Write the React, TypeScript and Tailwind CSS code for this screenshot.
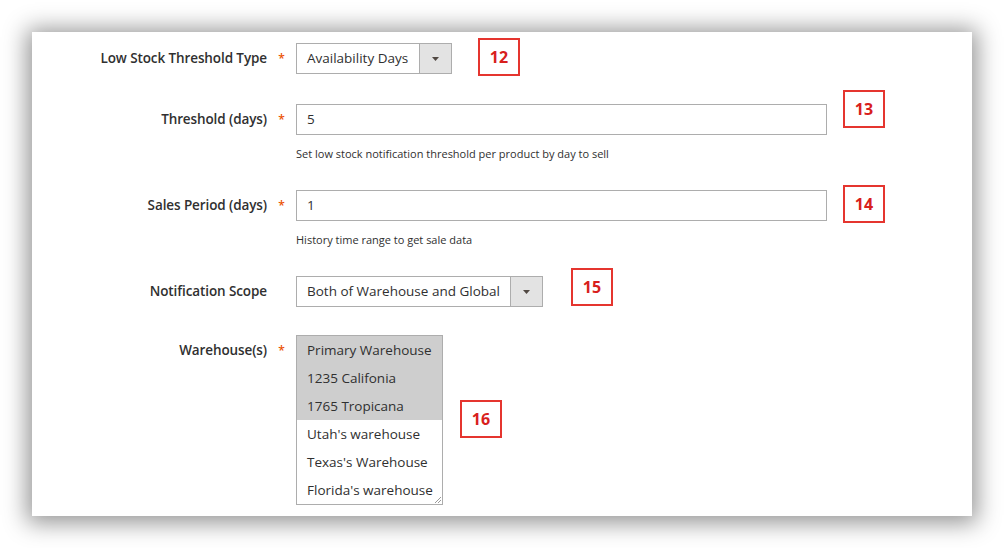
const font = { fontFamily: '"Open Sans", "Liberation Sans", sans-serif' };

function Badge({ n, className }: { n: string; className: string }) {
  return (
    <div
      className={`flex h-[38px] w-[42px] shrink-0 items-center justify-center border-2 border-[#e5352f] text-[16px] font-bold text-[#d8201c] ${className}`}
    >
      {n}
    </div>
  );
}

function Label({ text, required }: { text: string; required?: boolean }) {
  return (
    <>
      <div className="flex h-[31px] w-[235px] shrink-0 items-center justify-end text-[13.5px] font-semibold tracking-[-0.1px] text-[#303030]">
        {text}
      </div>
      <div className="flex h-[31px] w-[29px] shrink-0 items-center justify-center text-[12px] font-semibold text-[#eb5202]">
        {required ? '*' : ''}
      </div>
    </>
  );
}

function Select({ value, width }: { value: string; width: string }) {
  return (
    <div className={`flex h-[31px] shrink-0 border border-[#adadad] bg-white ${width}`}>
      <div className="flex flex-1 items-center px-[10px] text-[13.5px] text-[#303030]">{value}</div>
      <div className="flex w-[32px] items-center justify-center border-l border-[#adadad] bg-[#e3e3e3]">
        <svg width="7" height="4" viewBox="0 0 7 4">
          <path d="M0 0h7L3.5 4z" fill="#514943" />
        </svg>
      </div>
    </div>
  );
}

const warehouses = [
  { name: 'Primary Warehouse', on: true },
  { name: '1235 Califonia', on: true },
  { name: '1765 Tropicana', on: true },
  { name: "Utah's warehouse", on: false },
  { name: "Texas's Warehouse", on: false },
  { name: "Florida's warehouse", on: false },
];

export default function App() {
  return (
    <div className="h-[548px] w-[1004px] bg-white pl-[32px] pt-[32px]" style={font}>
      <div className="h-[484px] w-[940px] bg-white pt-[11px] shadow-[0_2px_22px_5px_rgba(0,0,0,0.42)]">
        {/* Low stock threshold type */}
        <div className="flex h-[61px] items-start">
          <Label text="Low Stock Threshold Type" required />
          <Select value="Availability Days" width="w-[156px]" />
          <Badge n="12" className="ml-[26px] mt-[-5px]" />
        </div>

        {/* Threshold */}
        <div className="flex h-[86px] items-start">
          <Label text="Threshold (days)" required />
          <div className="flex flex-col">
            <div className="flex h-[31px] w-[531px] items-center border border-[#adadad] px-[10px] text-[13.5px] text-[#303030]">
              5
            </div>
            <div className="mt-[11px] text-[11px] leading-[15px] text-[#303030]">
              Set low stock notification threshold per product by day to sell
            </div>
          </div>
          <Badge n="13" className="ml-[16px] mt-[-14px]" />
        </div>

        {/* Sales period */}
        <div className="flex h-[86px] items-start">
          <Label text="Sales Period (days)" required />
          <div className="flex flex-col">
            <div className="flex h-[31px] w-[531px] items-center border border-[#adadad] px-[10px] text-[13.5px] text-[#303030]">
              1
            </div>
            <div className="mt-[11px] text-[11px] leading-[15px] text-[#303030]">
              History time range to get sale data
            </div>
          </div>
          <Badge n="14" className="ml-[16px] mt-[-5px]" />
        </div>

        {/* Notification scope */}
        <div className="flex h-[59px] items-start">
          <Label text="Notification Scope" />
          <Select value="Both of Warehouse and Global" width="w-[247px]" />
          <Badge n="15" className="ml-[28px] mt-[-8px]" />
        </div>

        {/* Warehouses */}
        <div className="flex items-start">
          <Label text="Warehouse(s)" required />
          <div className="relative w-[147px] shrink-0 border border-[#adadad] bg-white">
            {warehouses.map((w) => (
              <div
                key={w.name}
                className={`h-[28px] whitespace-nowrap px-[10px] text-[13.5px] leading-[28px] text-[#303030] ${w.on ? 'bg-[#cecece]' : ''}`}
              >
                {w.name}
              </div>
            ))}
            <svg className="absolute bottom-[1px] right-[1px]" width="7" height="7" viewBox="0 0 7 7">
              <path d="M7 1L1 7M7 4L4 7" stroke="#9a9a9a" strokeWidth="1" />
            </svg>
          </div>
          <Badge n="16" className="ml-[17px] mt-[65px]" />
        </div>
      </div>
    </div>
  );
}
